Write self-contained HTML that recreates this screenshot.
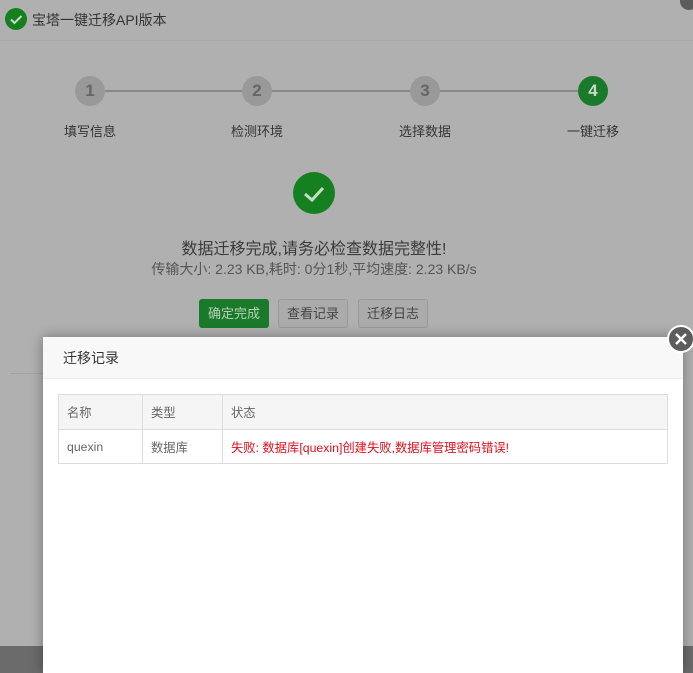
<!DOCTYPE html>
<html><head><meta charset="utf-8"><style>
*{margin:0;padding:0;box-sizing:border-box}
body{width:693px;height:673px;overflow:hidden;background:#b0b0b0;font-family:"Liberation Sans","Noto Sans CJK SC",sans-serif;position:relative}
.abs{position:absolute}
.title{left:32px;top:10px;font-size:14px;color:#333}
.hd{left:0;top:40px;width:693px;height:1px;background:#a6a6a6}
.step{width:30px;height:30px;border-radius:50%;background:#999;color:#666;font-weight:bold;font-size:17px;text-align:center;line-height:30px}
.lab{font-size:13px;color:#333;width:80px;text-align:center}
.btn{top:299px;height:29px;border-radius:3px;font-size:13px;text-align:center;line-height:27px;color:#444;border:1px solid #999;background:#ababab}
.modal{left:43px;top:337px;width:640px;height:336px;background:#fff;box-shadow:0 0 12px rgba(0,0,0,.35)}
table{border-collapse:collapse;position:absolute;left:15px;top:57px;width:610px;font-size:12.3px}
td,th{border:1px solid #ddd;padding:0 8px;text-align:left;font-weight:normal;color:#666}
th{background:#f5f5f5;height:35px}
td{height:34px}
</style></head><body>
<div class="abs" style="left:5px;top:8px;width:22px;height:22px;border-radius:50%;background:#15801f"><svg width="22" height="22"><path d="M6 11.5l3.5 3.5 7-7" stroke="#c8dcc8" stroke-width="2" fill="none"/></svg></div>
<div class="abs title">宝塔一键迁移API版本</div>
<div class="abs" style="left:680px;top:-8px;width:18px;height:18px;border-radius:50%;background:#5c5c5c"></div>
<div class="abs hd"></div>
<div class="abs" style="left:105px;top:90px;width:473px;height:2px;background:#888"></div>
<div class="abs step" style="left:75px;top:76px">1</div>
<div class="abs step" style="left:242px;top:76px">2</div>
<div class="abs step" style="left:410px;top:76px">3</div>
<div class="abs step" style="left:578px;top:76px;background:#1a7a2b;color:#c9d9c9">4</div>
<div class="abs lab" style="left:50px;top:121px">填写信息</div>
<div class="abs lab" style="left:217px;top:121px">检测环境</div>
<div class="abs lab" style="left:385px;top:121px">选择数据</div>
<div class="abs lab" style="left:553px;top:121px">一键迁移</div>
<div class="abs" style="left:293px;top:172px;width:42px;height:42px;border-radius:50%;background:#15801f"><svg width="42" height="42"><path d="M12 22l7 6 11-12" stroke="#c8dcc8" stroke-width="3" fill="none"/></svg></div>
<div class="abs" style="left:0;width:628px;top:235px;text-align:center;font-size:16px;color:#3a3a3a">数据迁移完成,请务必检查数据完整性!</div>
<div class="abs" style="left:0;width:628px;top:259px;text-align:center;font-size:14px;color:#555">传输大小: 2.23 KB,耗时: 0分1秒,平均速度: 2.23 KB/s</div>
<div class="abs btn" style="left:199px;width:70px;background:#1a7a2b;border-color:#1a7a2b;color:#b7d0b7">确定完成</div>
<div class="abs btn" style="left:278px;width:70px">查看记录</div>
<div class="abs btn" style="left:358px;width:70px">迁移日志</div>
<div class="abs" style="left:10px;top:373px;width:40px;height:1px;background:#a3a3a3"></div>
<div class="abs" style="left:0;top:646px;width:693px;height:27px;background:#6b6b6b"></div>
<div class="abs modal">
<div style="height:42px;background:#f8f8f8;border-bottom:1px solid #eee;padding-left:20px;line-height:42px;font-size:14px;color:#333">迁移记录</div>
<table><tr><th style="width:84px">名称</th><th style="width:80px">类型</th><th>状态</th></tr>
<tr><td>quexin</td><td>数据库</td><td style="color:#e0101e">失败: 数据库[quexin]创建失败,数据库管理密码错误!</td></tr></table>
</div>
<div class="abs" style="left:667px;top:325px;width:28px;height:28px;border-radius:50%;background:#5c5c5c;border:2px solid #fff"><svg width="24" height="24"><path d="M7 7l10 10M17 7L7 17" stroke="#fff" stroke-width="2.5"/></svg></div>
</body></html>
